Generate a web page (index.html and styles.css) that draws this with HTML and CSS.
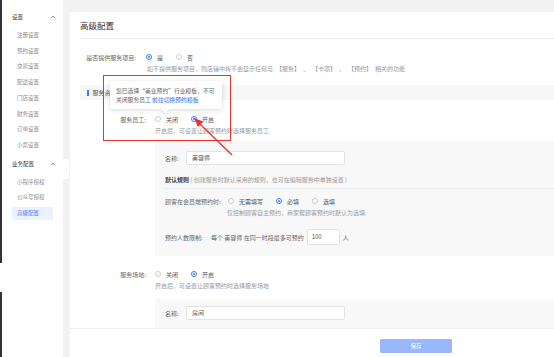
FILE: index.html
```html
<!DOCTYPE html>
<html lang="zh-CN">
<head>
    <meta charset="UTF-8">
    <meta name="viewport" content="width=device-width, initial-scale=1.0">
    <title>高级配置</title>
    <link rel="stylesheet" href="styles.css">
</head>
<body>
    <div class="frame">
        <div class="edge">
            <div class="edge-top"></div>
            <div class="edge-gap"></div>
            <div class="edge-bottom"></div>
        </div>

        <aside class="sidebar">
            <div class="menu-group">设置
                <svg class="chevron" viewBox="0 0 6 4"><path d="M1 3.3 L3 1.1 L5 3.3" fill="none" stroke="#777" stroke-width="0.9"/></svg>
            </div>
            <div class="menu-item">注册设置</div>
            <div class="menu-item">预约设置</div>
            <div class="menu-item">交易设置</div>
            <div class="menu-item">配送设置</div>
            <div class="menu-item">门店设置</div>
            <div class="menu-item">财务设置</div>
            <div class="menu-item">订单设置</div>
            <div class="menu-item">小票设置</div>
            <div class="menu-group">业务配置
                <svg class="chevron" viewBox="0 0 6 4"><path d="M1 3.3 L3 1.1 L5 3.3" fill="none" stroke="#777" stroke-width="0.9"/></svg>
            </div>
            <div class="menu-item">小程序授权</div>
            <div class="menu-item">公众号授权</div>
            <div class="menu-item active">高级配置</div>
            <div class="collapse-tab">‹</div>
        </aside>

        <main class="panel">
            <div class="panel-head">
                <h1>高级配置</h1>
            </div>

            <div class="field field-top">
                <label class="label label-sm">是否提供服务项目:</label>
                <span class="radio checked"></span><span class="opt">是</span>
                <span class="radio"></span><span class="opt">否</span>
            </div>
            <p class="hint hint-sm">如不提供服务项目，则店铺中将不会显示任何与&ensp;【服务】&ensp;、&ensp;【卡项】&ensp;、&ensp;【预约】&ensp;相关的功能</p>

            <div class="section-title"><i></i>服务资源</div>

            <div class="field field-staff">
                <label class="label">服务员工:</label>
                <span class="radio"></span><span class="opt">关闭</span>
                <span class="radio checked"></span><span class="opt">开启</span>
            </div>
            <p class="hint">开启后，可设置让顾客预约时选择服务员工</p>

            <div class="sub-box">
                <div class="sub-row">
                    <span class="sub-label">名称:</span>
                    <div class="input">美容师</div>
                </div>
                <div class="rule-row"><b>默认规则</b> ( 创建服务时默认采用的规则，也可在编辑服务中单独设置 )</div>
                <div class="sub-row sub-row-radio">
                    <span class="sub-label wide">顾客在会员端预约时:</span>
                    <span class="radio"></span><span class="opt">无需填写</span>
                    <span class="radio checked"></span><span class="opt">必填</span>
                    <span class="radio"></span><span class="opt">选填</span>
                </div>
                <p class="hint hint-inner">仅控制顾客自主预约，商家帮顾客预约时默认为选填</p>
                <div class="sub-row sub-row-limit">
                    <span class="sub-label">预约人数限制:</span>
                    <span class="limit-text">每个 美容师 在同一时段最多可预约</span>
                    <div class="input input-num">100</div>
                    <span class="unit">人</span>
                </div>
            </div>

            <div class="field field-place">
                <label class="label">服务场地:</label>
                <span class="radio"></span><span class="opt">关闭</span>
                <span class="radio checked"></span><span class="opt">开启</span>
            </div>
            <p class="hint">开启后，可设置让顾客预约时选择服务场地</p>

            <div class="sub-box sub-box-place">
                <div class="sub-row">
                    <span class="sub-label">名称:</span>
                    <div class="input">房间</div>
                </div>
            </div>

            <div class="panel-foot">
                <button class="save-btn">保存</button>
            </div>
        </main>
    </div>

    <!-- 标注层 -->
    <div class="tooltip">
        您已选择“美业预约”行业模板，不可<br>
        关闭服务员工 <a href="#">前往切换预约模板</a>
    </div>
    <div class="mark-box"></div>
    <svg class="mark-arrow" viewBox="0 0 554 357">
        <line x1="232" y1="155" x2="200" y2="124" stroke="#e8322e" stroke-width="1.3"/>
        <polygon points="194,118 203.2,121.6 198,127" fill="#e8322e"/>
    </svg>
</body>
</html>
```

FILE: styles.css
```css
* {
    margin: 0;
    padding: 0;
    box-sizing: border-box;
}

body {
    font-family: "Noto Sans CJK SC", "Noto Sans", sans-serif;
    background: #f2f2f2;
    width: 554px;
    height: 357px;
    overflow: hidden;
    position: relative;
    color: #666;
    font-size: 6px;
    text-spacing-trim: space-all;
}

.frame {
    display: flex;
    height: 357px;
}

/* 左侧深色边 */
.edge {
    width: 2px;
    display: flex;
    flex-direction: column;
    background: #fff;
}

.edge-top {
    height: 263px;
    background: #333;
}

.edge-gap {
    height: 29px;
}

.edge-bottom {
    flex: 1;
    background: #333;
}

.sidebar {
    width: 61px;
    background: #fff;
    padding-top: 8px;
    position: relative;
}

.menu-group {
    height: 18.4px;
    line-height: 18.4px;
    padding-left: 10px;
    font-size: 5.5px;
    color: #333;
    position: relative;
}

.chevron {
    position: absolute;
    left: 48px;
    top: 7px;
    width: 6px;
    height: 4px;
}

.menu-item {
    height: 13px;
    line-height: 13px;
    margin: 2.7px 0 2.7px 10px;
    width: 41px;
    padding-left: 5px;
    font-size: 5.5px;
    color: #888;
}

.menu-item.active {
    background: #ebf1ff;
    color: #4a7bf7;
}

.collapse-tab {
    position: absolute;
    right: -6px;
    top: 159px;
    width: 6px;
    height: 20px;
    background: #fff;
    border-radius: 0 3px 3px 0;
    color: #aaa;
    font-size: 5px;
    line-height: 20px;
    text-align: center;
}

.panel {
    flex: 1;
    margin: 12px 0 0 7px;
    background: #fff;
}

.panel-head {
    margin: 0 0 0 10px;
    height: 27px;
    border-bottom: 1px solid #eee;
}

.panel-head h1 {
    font-size: 8.5px;
    font-weight: normal;
    color: #333;
    line-height: 26px;
}

.field {
    display: flex;
    align-items: center;
    height: 12px;
}

.field-top {
    margin-top: 12px;
}

.field-staff {
    margin-top: 13px;
}

.field-place {
    margin-top: 12px;
}

.label {
    width: 76px;
    text-align: right;
    margin-right: 9px;
    color: #666;
}

.label-sm {
    width: 66px;
    margin-right: 10px;
}

.radio {
    width: 6px;
    height: 6px;
    border: 0.8px solid #ccc;
    border-radius: 50%;
    background: #fff;
    margin-right: 5px;
    flex-shrink: 0;
    position: relative;
}

.radio.checked {
    border-color: #3b7bff;
}

.radio.checked::after {
    content: "";
    position: absolute;
    left: 1.1px;
    top: 1.1px;
    width: 2.2px;
    height: 2.2px;
    border-radius: 50%;
    background: #3b7bff;
}

.opt {
    margin-right: 13px;
    color: #555;
}

.hint {
    line-height: 12px;
    height: 12px;
    color: #999;
    margin-left: 85px;
    white-space: nowrap;
}

.hint-sm {
    margin-left: 77px;
}

.section-title {
    margin: 10px 0 0 10px;
    height: 15px;
    line-height: 15px;
    background: #f7f7f7;
    padding-left: 7px;
    color: #555;
    display: flex;
    align-items: center;
}

.section-title i {
    width: 1.5px;
    height: 6px;
    background: #3b7bff;
    margin-right: 4px;
}

.sub-box {
    margin: 4px 0 0 85px;
    background: #f8f8f8;
    padding: 10px 0 11px 10px;
}

.sub-box-place {
    margin-top: 7px;
    padding: 7px 0 8px 10px;
}

.sub-row {
    display: flex;
    align-items: center;
    height: 14px;
}

.sub-label {
    width: 21px;
    color: #666;
}

.sub-label.wide {
    width: 63px;
}

.input {
    width: 159px;
    height: 14px;
    line-height: 12px;
    border: 1px solid #e3e3e3;
    border-radius: 1.5px;
    background: #fff;
    padding-left: 5px;
    color: #555;
}

.rule-row {
    margin-top: 7px;
    height: 17px;
    line-height: 16px;
    border-bottom: 1px solid #ececec;
    color: #999;
}

.rule-row b {
    color: #444;
}

.sub-row-radio {
    margin-top: 6px;
    height: 12px;
}

.hint-inner {
    margin-left: 62px;
}

.sub-row-limit {
    margin-top: 10px;
    height: 16px;
}

.sub-row-limit .sub-label {
    width: 46px;
}

.limit-text {
    color: #666;
}

.input-num {
    width: 33px;
    height: 16px;
    line-height: 14px;
    margin-left: 3px;
    padding-left: 4px;
}

.unit {
    margin-left: 3px;
    color: #666;
}

.panel-foot {
    border-top: 1px solid #eee;
    padding: 10px 0 0 310px;
}

.save-btn {
    width: 72px;
    height: 14px;
    border: none;
    border-radius: 1.5px;
    background: #98b7fd;
    color: #fff;
    font-family: inherit;
    font-size: 5.5px;
}

/* 标注 */
.tooltip {
    position: absolute;
    left: 110px;
    top: 81px;
    width: 112px;
    height: 28px;
    background: #fff;
    box-shadow: 0 1px 5px rgba(0, 0, 0, 0.15);
    border-radius: 2px;
    padding: 4.5px 0 0 6px;
    line-height: 9px;
    font-size: 5.8px;
    color: #666;
    white-space: nowrap;
}

.tooltip a {
    color: #2f6bff;
    text-decoration: none;
}

.tooltip::after {
    content: "";
    position: absolute;
    left: 53px;
    bottom: -2.5px;
    width: 5px;
    height: 5px;
    background: #fff;
    transform: rotate(45deg);
    box-shadow: 2px 2px 3px rgba(0, 0, 0, 0.06);
}

.mark-box {
    position: absolute;
    left: 103px;
    top: 75px;
    width: 128px;
    height: 66px;
    border: 1px solid #e8322e;
}

.mark-arrow {
    position: absolute;
    left: 0;
    top: 0;
    width: 554px;
    height: 357px;
    pointer-events: none;
}
```
